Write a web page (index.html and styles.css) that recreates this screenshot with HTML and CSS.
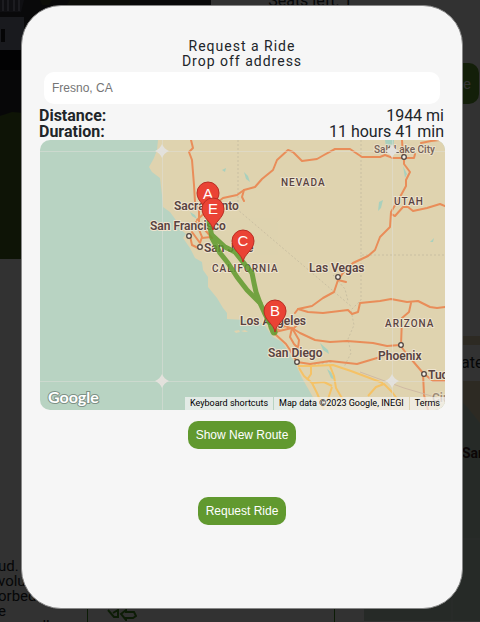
FILE: index.html
```html
<!DOCTYPE html>
<html lang="en">
<head>
<meta charset="utf-8">
<title>Request a Ride</title>
<link rel="stylesheet" href="styles.css">
</head>
<body>
<main class="page">
  <section class="hero">
    <svg class="photo" viewBox="0 0 211 259" preserveAspectRatio="none" aria-hidden="true">
      <rect width="211" height="259" fill="#2d2d32"/>
      <path d="M0 12h21l3-12H0z" fill="#4b4b5a"/>
      <path d="M3 0v11M8 0v11M14 0v11M19 0v11" stroke="#8c8ca0" stroke-width="2"/>
      <rect y="17" width="24" height="33" fill="#7d8296"/>
      <rect x="1" y="29" width="4" height="13" fill="#19191e"/>
      <rect y="50" width="24" height="20" fill="#0a0a0f"/>
      <rect y="70" width="24" height="45" fill="#232328"/>
      <path d="M0 116l12-4 12 1v146H0z" fill="#46641e"/>
      <path d="M40 0h12l-3 5h-7zM70 0h60v6H66z" fill="#41462d"/>
    </svg>
    <div class="offer">
      <p class="seats">Seats left: 1</p>
      <button class="button choose" type="button" tabindex="-1">Choose</button>
    </div>
  </section>
  <section class="details">
    <p class="about">ud.<br>volu<br>orbed<br>e<br>s appello</p>
    <div class="notice">
      <svg class="notice-icon" viewBox="0 0 30 22" aria-hidden="true">
        <path d="M1 11l6 7h4v-7l-5 3M14 15l5-4v2h8l2 4-3 2h-7v2z" fill="none" stroke="#3f8a1f" stroke-width="2"/>
      </svg>
    </div>
    <div class="area">
      <p class="search">ate</p>
      <svg class="area-map" viewBox="0 0 116 240" preserveAspectRatio="none" aria-hidden="true">
        <rect width="116" height="240" fill="#bdd3c4"/>
        <path d="M90 0h26v42l-12-15-8-8z" fill="#dfd3af"/>
        <path d="M0 158h116M88 158v82" stroke="#d2dcd7"/>
        <text class="area-label" x="98" y="77">San</text>
      </svg>
    </div>
  </section>
</main>

<div class="overlay">
  <form class="dialog" role="dialog" aria-label="Request a Ride">
    <h1 class="title">Request a Ride</h1>
    <label class="title" for="address">Drop off address</label>
    <input class="address" id="address" type="text" placeholder="Fresno, CA">
    <dl class="stats">
      <div class="stat"><dt>Distance:</dt><dd>1944 mi</dd></div>
      <div class="stat"><dt>Duration:</dt><dd>11 hours 41 min</dd></div>
    </dl>
    <div class="map">
      <svg class="map-canvas" viewBox="40 140 405 270" role="img" aria-label="Route map">
        <defs>
          <path id="pin" d="M0 0C-1-8-11-12-11-21A11 11 0 0 1 11-21C11-12 1-8 0 0z"/>
          <path id="star" d="M0-7Q2-2 7 0Q2 2 0 7Q-2 2-7 0Q-2-2 0-7z"/>
        </defs>
        <rect x="40" y="140" width="405" height="270" fill="#b8d3c2"/>
        <path fill="#dfd3af" d="M158 140L157 150 154 158 149 167 152 172 160 178 162 195 163 207 170 212 178 223 180 229 186 234 183 238 190 248 195 258 202 262 203 270 208 277 208 287 217 298 223 308 227 313 227 319 245 320 255 321 264 324 270 333 273 337 282 342 290 354 296 365 302 378 310 392 320 410 375 410 368 393 350 385 343 388 349 402 352 410 445 410V140z"/>
        <path fill="#dfd3af" d="M234 331l5-1 1 2-4 1zM241 331l4-1 3 2-4 0z"/>
        <path fill="#a9d0bd" d="M244 172l4 4 2 6-4-3zM379 202l4-2-2 8-3 3zM385 140h9l-1 12-7-5zM403 166l4 8-2 4zM190 212l5 3 2 4-5-3zM320 343l8 7 1 4-6-4zM430 242l4-4-1 4zM327 369l4 3 4 8-4-2zM222 170l4-2-1 4z"/>
        <g fill="none" stroke="#c9bfa2" stroke-dasharray="2 2">
          <path d="M238 140v70L352 307M361 140v115h84M361 255v45l-10 10 3 15-6 14 3 14-7 14"/>
          <path d="M333 275l12 14 3 12M298 367l34-5"/>
        </g>
        <g fill="none" stroke="#e98d59" stroke-width="2" stroke-linejoin="round" stroke-linecap="round">
          <path d="M191 140L193 148 189 152 192 160 194 185 195 202 199 210 199 223"/>
          <path d="M197 220L210 208 223 198 237 195 244 190 255 187 262 179 273 170 277 160 288 150 293 152 302 161 317 159 324 155 335 149 350 149 362 157 380 157 385 155 393 158 414 158 415 154"/>
          <path d="M244 190l-2 7 2 4M402 140l1 16M421 143l10-2 9-1"/>
          <path d="M404 158v6L410 172 406 180 406 186 400 197 391 212 390 227 380 237 375 250 368 256 353 263 343 273 338 280 334 292 323 298 312 306 298 309 295 313"/>
          <path d="M391 214l4 2 8-9 5 0 5 4 14-3 13-4 5 2M338 280l8 2"/>
          <path d="M298 309L308 312 323 313 348 310 352 314 358 312 360 303 380 301 391 299 407 302 418 301 430 307 437 308 445 307"/>
          <path d="M411 303l-2 9-7 6-1 27"/>
          <path d="M275 332L292 328 300 333 315 340 330 342 347 341 373 343 387 346 400 345 406 353 423 373 424 395 428 410M423 373l10 8 12 0"/>
          <path d="M275 334L286 344 290 350 297 362 310 364 330 361 357 364 377 358 387 355"/>
          <path d="M292 328l-2 9 4 7 4 4 1-8-7-12M276 330l9-4 8 3 4-4"/>
          <path d="M192 232l8 11 2-6-6-15M190 236l2 9 8 4M202 238l9-1M199 223l13 15"/>
        </g>
        <g fill="none" stroke="#f5c266" stroke-width="2" stroke-linejoin="round">
          <path d="M298 366l12 0 23-1 18 6 32 12M299 368l5 8 8 7 5 10 7 17M311 366l0 8-4 6M312 383l12-1 8 4M330 366l4 10 2 12 7 12M332 387l-4 12M368 396l8-9 8-3 8 8 9 12"/>
        </g>
        <path d="M360 372l44 16 41 12" fill="none" stroke="#cfb9a4"/>
        <path d="M40 151.500H445M40 381.500H445M162.500 140V410M392.500 140V410" stroke="#dfe0da" stroke-opacity=".5"/>
        <g class="place-labels">
          <text class="city" x="174" y="210">Sacramento</text>
          <text class="city" x="150" y="230">San Francisco</text>
          <text class="city" x="204" y="252">San Jose</text>
          <text class="city" x="309" y="272">Las Vegas</text>
          <text class="city" x="240" y="325">Los Angeles</text>
          <text class="city" x="268" y="357">San Diego</text>
          <text class="city" x="378" y="360">Phoenix</text>
          <text class="city" x="428" y="379">Tucson</text>
          <text class="city small" x="374" y="153">Salt Lake City</text>
          <text class="city faded" x="432" y="402">Ciudad</text>
          <text class="state" x="281" y="186">NEVADA</text>
          <text class="state" x="394" y="205">UTAH</text>
          <text class="state" x="212" y="272">CALIFORNIA</text>
          <text class="state" x="385" y="327">ARIZONA</text>
        </g>
        <g fill="#f4efe4" stroke="#4f4542" stroke-width="1.300">
          <circle cx="189" cy="236" r="2.300"/><circle cx="200" cy="247" r="2.300"/>
          <circle cx="338" cy="277" r="2.300"/><circle cx="404" cy="157" r="2.300"/>
          <circle cx="297" cy="362" r="2.300"/><circle cx="401" cy="345" r="2.300"/>
          <circle cx="424" cy="374" r="2.300"/>
        </g>
        <g fill="#e3e1dc">
          <use href="#star" x="162" y="151"/><use href="#star" x="162" y="381"/>
          <use href="#star" x="392" y="151"/><use href="#star" x="392" y="381"/>
        </g>
        <g fill="none" stroke="#5f9a2d" stroke-linecap="round" stroke-linejoin="round" opacity=".85">
          <path stroke-width="5" d="M209 221L212 238 220 253 228 263 237 277 247 290 260 303 265 314 274 332"/>
          <path stroke-width="5" d="M212 235L225 247 235 252 243 262 252 273 254 283 256 292 260 303"/>
          <path stroke-width="7" d="M272 327l2 5"/>
        </g>
        <g fill="#ea4335" stroke="#b92d24">
          <use href="#pin" x="208" y="214"/>
          <use href="#pin" x="275" y="332"/>
          <use href="#pin" x="243" y="262"/>
        </g>
        <g class="pin-letters">
          <text x="208" y="199">A</text><text x="275" y="316">B</text><text x="243" y="246">C</text>
        </g>
        <use href="#pin" x="213" y="230" fill="#ea4335" stroke="#b92d24"/>
        <text class="pin-letters" x="213" y="214">E</text>
        <text class="brand" x="48" y="403">Google</text>
      </svg>
      <div class="credits">
        <button class="credit" type="button">Keyboard shortcuts</button>
        <span class="credit">Map data ©2023 Google, INEGI</span>
        <a class="credit" href="#terms">Terms</a>
      </div>
    </div>
    <button class="button" type="button">Show New Route</button>
    <button class="button submit" type="submit">Request Ride</button>
  </form>
</div>
</body>
</html>
```

FILE: styles.css
```css
* {
  box-sizing: border-box;
}

body {
  margin: 0;
  background: #f8f8f8;
  color: #212529;
  font-family: Roboto, "Liberation Sans", sans-serif;
}

p,
h1,
dl,
dd {
  margin: 0;
}

.page {
  display: grid;
  grid-template-columns: minmax(0, 1fr);
  grid-template-rows: 259px 1fr;
  height: 100vh;
  overflow: hidden;
}

.hero {
  display: grid;
  grid-template-columns: 44% 1fr;
}

.photo {
  width: 100%;
  height: 259px;
}

.offer {
  display: flex;
  flex-direction: column;
  align-items: flex-end;
  padding-right: 1px;
}

.seats {
  align-self: flex-start;
  height: 63px;
  padding-left: 57px;
  font-size: 16px;
  line-height: 2px;
}

.details {
  display: grid;
  grid-template-columns: 87px 248px minmax(0, 1fr);
  min-height: 0;
}

.about {
  padding-top: 300px;
  margin-left: -2px;
  font-size: 15px;
  line-height: 15px;
  white-space: nowrap;
}

.notice {
  padding: 340px 19px 0;
  border: solid #3f8a1f;
  border-width: 0 1px;
}

.notice-icon {
  width: 30px;
  height: 22px;
}

.area {
  padding-top: 77px;
  margin-left: 29px;
}

.search {
  padding-left: 97px;
  border-top: 9px solid #dfd3af;
  background: #f8f8f8;
  font-size: 16px;
  line-height: 36px;
}

.area-map {
  display: block;
  width: 100%;
  height: 240px;
}

.area-label {
  fill: #3c1e1e;
  font-size: 14px;
  font-weight: 700;
}

.overlay {
  position: fixed;
  inset: 0;
  background: rgba(0, 0, 0, 0.8);
}

.dialog {
  position: absolute;
  inset: 5px 17px 13px 21px;
  display: flex;
  flex-direction: column;
  align-items: center;
  padding: 33px 17px;
  border: 1px solid #888;
  border-radius: 40px;
  background: #f6f6f6;
}

.title {
  font-size: 14px;
  font-weight: 400;
  line-height: 15px;
  letter-spacing: 1px;
}

.address {
  align-self: stretch;
  height: 32px;
  margin: 3px 5px 4px;
  padding: 0 8px;
  border: 0;
  border-radius: 10px;
  background: #fff;
  color: #212529;
  font-family: "Liberation Sans", sans-serif;
  font-size: 12px;
}

.address::placeholder {
  color: #757575;
}

.stats {
  align-self: stretch;
  padding-right: 1px;
  font-size: 16px;
  line-height: 16px;
}

.stat {
  display: flex;
  justify-content: space-between;
}

.stat dt {
  font-weight: 700;
}

.map {
  position: relative;
  align-self: stretch;
  margin: 0 0 11px 1px;
  border-radius: 10px;
  overflow: hidden;
}

.map-canvas {
  display: block;
  width: 100%;
}

.place-labels {
  fill: #594341;
  stroke: #eee4cf;
  stroke-width: 2px;
  paint-order: stroke;
  stroke-linejoin: round;
}

.city {
  font-size: 12px;
  font-weight: 600;
}

.small {
  font-size: 10px;
  font-weight: 500;
  opacity: 0.8;
}

.faded {
  opacity: 0.5;
}

.state {
  font-size: 10px;
  font-weight: 500;
  letter-spacing: 1px;
}

.pin-letters {
  fill: #fff;
  font-family: "Liberation Sans", sans-serif;
  font-size: 15px;
  text-anchor: middle;
}

.brand {
  fill: #fff;
  stroke: #7d9186;
  stroke-width: 2px;
  paint-order: stroke;
  font-family: Lato, sans-serif;
  font-size: 16px;
  font-weight: 700;
}

.credits {
  position: absolute;
  right: 0;
  bottom: 0;
  display: flex;
  gap: 1px;
}

.credit {
  height: 13px;
  padding: 0 5px;
  border: 0;
  background: rgba(245, 245, 245, 0.7);
  color: #000;
  font-family: Roboto, sans-serif;
  font-size: 9px;
  line-height: 13px;
  text-decoration: none;
  white-space: nowrap;
}

.button {
  height: 28px;
  padding: 0 8px;
  border: 0;
  border-radius: 10px;
  background: #61992f;
  color: #fff;
  font-family: "Liberation Sans", sans-serif;
  font-size: 12px;
}

.choose {
  height: 41px;
  font-size: 14px;
}

.submit {
  margin-top: 48px;
}
```
